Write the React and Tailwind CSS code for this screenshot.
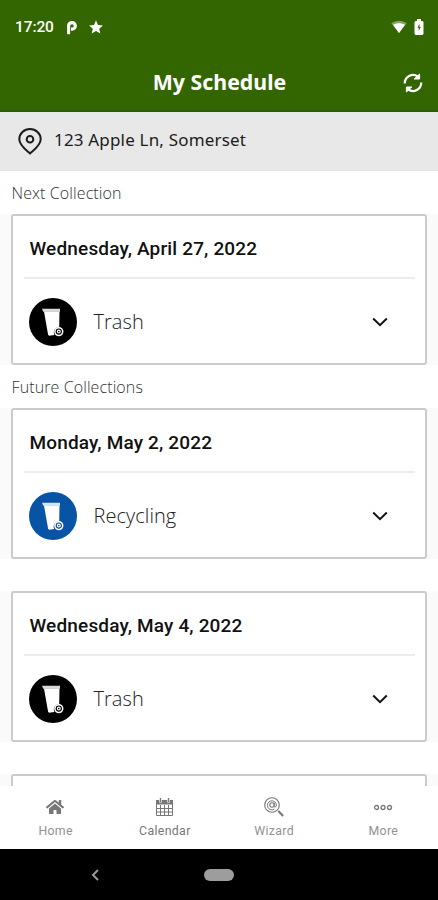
import { FaHome } from 'react-icons/fa'

const collections = [
  { date: 'Wednesday, April 27, 2022', type: 'Trash' },
  { date: 'Monday, May 2, 2022', type: 'Recycling' },
  { date: 'Wednesday, May 4, 2022', type: 'Trash' },
]

const StatusBar = () => (
  <div className="flex h-[54px] items-center justify-between pl-[15px] pr-[14px]">
    <div className="flex items-center">
      <span className="w-[51px] pt-px font-['Roboto',sans-serif] text-[15.5px] font-medium tracking-[-0.1px]">17:20</span>
      <svg className="h-[15px] w-[12px]" viewBox="0 0 12 15" fill="none" stroke="currentColor">
        <path d="M2.6 14.2V9" strokeWidth="3" />
        <path d="M2.6 9V6C2.6 3.8 4 2.7 6.1 2.7A3.2 3.2 0 0 1 6.1 9.1H5" strokeWidth="3.2" />
      </svg>
      <svg className="ml-[11px] h-[14px] w-[14px]" viewBox="0 0 14 14" fill="currentColor">
        <path d="M7 .3 9 5l4.9.4-3.7 3.3 1.1 4.9L7 11l-4.3 2.6 1.1-4.9L.1 5.4 5 5Z" />
      </svg>
    </div>
    <div className="flex items-center gap-[7px]">
      <svg className="h-[14px] w-[16px]" viewBox="0 0 16 14" fill="currentColor">
        <path d="M.3 3.2C4.8-.2 11.2-.2 15.7 3.2L8 13Z" opacity="0.4" />
        <path d="M2 4.8c3.4-2.2 8.6-2.2 12 0L8 13Z" />
      </svg>
      <svg className="h-[16px] w-[10px]" viewBox="0 0 10 16">
        <path d="M3 0h4v2h1.5l1 1v12l-1 1h-7l-1-1V3l1-1H3Z" fill="#fff" />
        <path d="M5.5 4.8 3.4 8.7h1.3v3.2L6.8 8H5.5Z" fill="#336600" />
      </svg>
    </div>
  </div>
)

const Header = () => (
  <header className="h-[112px] border-b-2 border-[#28600a] bg-[#336600] text-white">
    <StatusBar />
    <div className="grid h-[57px] grid-cols-[1fr_auto_1fr] items-center">
      <h1 className="col-start-2 pb-px pl-px font-['Noto_Sans',sans-serif] text-[21.3px] font-bold leading-[30px]">My Schedule</h1>
      <svg className="mr-[15px] h-[20px] w-[20px] justify-self-end" viewBox="0 0 20 20" fill="none" stroke="currentColor" strokeWidth="2.2">
        <path d="M1.8 10.5A8.2 8.2 0 0 1 14.8 3.6" />
        <path d="M18.2 9.5A8.2 8.2 0 0 1 5.2 16.4" />
        <path d="M16.6 1V6H11.2Z" fill="currentColor" strokeWidth="1" />
        <path d="M3.4 19V14H8.8Z" fill="currentColor" strokeWidth="1" />
      </svg>
    </div>
  </header>
)

const AddressBar = () => (
  <div className="flex h-[59px] items-center bg-[#e8e8e8] pl-[18px] text-[#1c1c1c]">
    <svg className="h-[28px] w-[24px]" viewBox="0 0 24 28" fill="none" stroke="currentColor" strokeWidth="2">
      <path d="M12 25.5C8 22 1.3 17.3 1.3 11.3a10.7 10.2 0 0 1 21.4 0C22.7 17.3 16 22 12 25.5Z" />
      <circle cx="12" cy="11.2" r="3.3" />
    </svg>
    <span className="ml-3 pb-[3px] font-['Noto_Sans',sans-serif] text-[17px] tracking-[0.18px]">123 Apple Ln, Somerset</span>
  </div>
)

const BinIcon = ({ type }) => (
  <svg className={`h-12 w-12 ${type === 'Recycling' ? 'text-[#0753a6]' : 'text-black'}`} viewBox="0 0 48 48">
    <circle cx="24" cy="24" r="24" fill="currentColor" />
    <path d="M13 10.8h18v3H14.2Z" fill="#fff" opacity="0.85" />
    <path d="M15 13.5h15.5l-.3 15.7a5.3 5.3 0 0 0-4.9 7.8l-5.2.7-1-1Z" fill="#fff" />
    <circle cx="29.8" cy="33.6" r="3.9" fill="currentColor" stroke="#fff" strokeWidth="1.5" />
    <circle cx="29.8" cy="33.6" r="1.4" fill="none" stroke="#fff" strokeWidth="1.2" />
  </svg>
)

const CollectionCard = ({ item }) => (
  <div className="bg-[#fafafa] px-[11px]">
    <div className="h-[151px] rounded-[3px] border-2 border-[#cbcbcb] bg-white pl-[11px] pr-[10px]">
      <h2 className="flex h-[63px] items-center border-b-2 border-[#ececec] pl-[5.5px] pt-[6px] font-['Roboto',sans-serif] text-[19px] font-medium tracking-[0.16px] text-[#111]">
        {item.date}
      </h2>
      <div className="flex h-[85px] items-center pl-[5px] pr-[27px]">
        <BinIcon type={item.type} />
        <span className="ml-[16.5px] flex-1 pt-px font-['Open_Sans',sans-serif] text-[20px] font-light tracking-[0.05px] text-[#222]">{item.type}</span>
        <svg className="mt-px h-[10px] w-[16px]" viewBox="0 0 16 10" fill="none" stroke="#111" strokeWidth="2">
          <path d="m1.2 1.5 6.8 6.6 6.8-6.6" />
        </svg>
      </div>
    </div>
  </div>
)

const CalendarIcon = () => (
  <svg className="h-[18px] w-[17px]" viewBox="0 0 17 18" fill="none" stroke="currentColor">
    <path d="M0 2h17v4.5H0Z" fill="currentColor" stroke="none" />
    <path d="M.5 3v14.5h16V3M4.5 7v10.5M8.5 7v10.5M12.5 7v10.5M.5 10.5h16M.5 14h16" />
    <path d="M4.5.5v4M12.5.5v4" stroke="#fff" strokeWidth="2.6" />
    <path d="M4.5 0v4M12.5 0v4" strokeWidth="1.4" />
  </svg>
)

const WizardIcon = () => (
  <svg className="h-[20px] w-[20px]" viewBox="0 0 20 20" fill="none" stroke="currentColor">
    <circle cx="8" cy="8" r="7.3" strokeWidth="1.1" />
    <circle cx="8" cy="8" r="2.2" strokeWidth="1.1" />
    <path d="M10.2 5.5v3.3c0 2 2.2 1.6 2.2-.8A4.5 4.5 0 1 0 10.5 12" strokeWidth="1" />
    <path d="m14.3 14 4.8 5" strokeWidth="2" />
  </svg>
)

const MoreIcon = () => (
  <svg className="h-[8px] w-[20px]" viewBox="0 0 20 8" fill="none" stroke="currentColor" strokeWidth="1.3">
    <circle cx="3.5" cy="4.5" r="2" />
    <circle cx="10" cy="4.5" r="2" />
    <circle cx="16.5" cy="4.5" r="2" />
  </svg>
)

const navItems = [
  { label: 'Home', icon: <FaHome className="mr-px h-[18px] w-[18px]" />, color: 'text-[#929292]' },
  { label: 'Calendar', icon: <CalendarIcon />, color: 'text-[#777]' },
  { label: 'Wizard', icon: <WizardIcon />, color: 'text-[#929292]' },
  { label: 'More', icon: <MoreIcon />, color: 'text-[#929292]' },
]

const BottomNav = () => (
  <nav className="grid h-[63px] grid-cols-4 bg-white pl-px">
    {navItems.map(({ label, icon, color }) => (
      <div key={label} className={`flex flex-col items-center pt-[11px] ${color}`}>
        <div className="flex h-5 items-center text-[#777]">{icon}</div>
        <span className="mt-[5px] font-['Roboto',sans-serif] text-[12.3px] leading-[18px] tracking-[0.35px]">{label}</span>
      </div>
    ))}
  </nav>
)

const SystemNav = () => (
  <div className="grid h-[51px] grid-cols-[1fr_30px_1fr] items-center bg-black">
    <svg className="ml-[91px] h-[12px] w-[8px]" viewBox="0 0 8 12" fill="none" stroke="#999" strokeWidth="2">
      <path d="M7 1 2 6l5 5" />
    </svg>
    <div className="h-[12px] rounded-full bg-[#9d9d9d]" />
  </div>
)

const SectionLabel = ({ children }) => (
  <p className="flex h-[43px] items-center pl-[11.5px] font-['Open_Sans',sans-serif] text-[16px] font-light tracking-[0.1px] text-[#333]">
    {children}
  </p>
)

const App = () => (
  <div className="flex h-[900px] w-[438px] flex-col overflow-hidden bg-white">
    <Header />
    <AddressBar />
    <main className="h-[615px] overflow-hidden">
      <SectionLabel>Next Collection</SectionLabel>
      <CollectionCard item={collections[0]} />
      <SectionLabel>Future Collections</SectionLabel>
      <div className="space-y-8">
        <CollectionCard item={collections[1]} />
        <CollectionCard item={collections[2]} />
        <div className="bg-[#fafafa] px-[11px]">
          <div className="h-[151px] rounded-[3px] border-2 border-[#cbcbcb] bg-white" />
        </div>
      </div>
    </main>
    <BottomNav />
    <SystemNav />
  </div>
)

export default App
